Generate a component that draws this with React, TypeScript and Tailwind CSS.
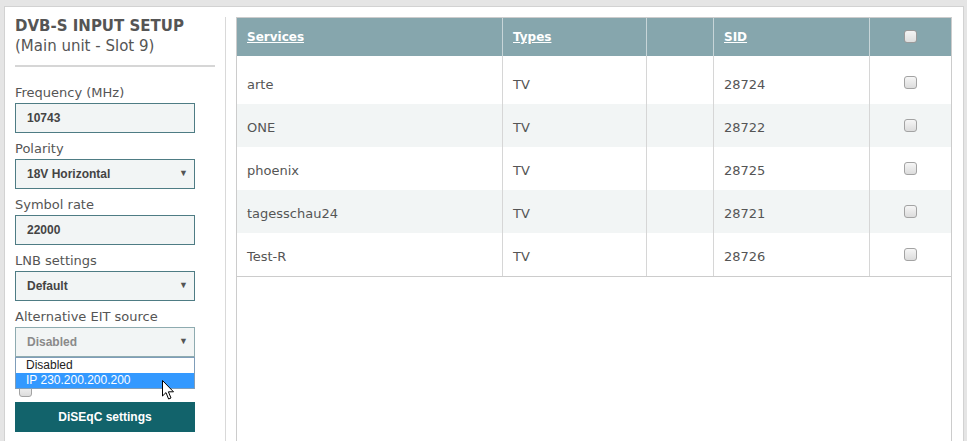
import React from "react";

const services = [
  { name: "arte", type: "TV", sid: "28724" },
  { name: "ONE", type: "TV", sid: "28722" },
  { name: "phoenix", type: "TV", sid: "28725" },
  { name: "tagesschau24", type: "TV", sid: "28721" },
  { name: "Test-R", type: "TV", sid: "28726" },
];

const Box: React.FC<{ header?: boolean }> = ({ header }) => (
  <span
    className={
      "inline-block w-[13px] h-[13px] rounded-[3px] border " +
      (header
        ? "border-[#9a9a9a] bg-gradient-to-b from-[#f4f4f4] to-[#dedede]"
        : "border-[#a3a3a3] bg-gradient-to-b from-[#f6f6f6] to-[#dcdcdc]")
    }
  />
);

const Field: React.FC<{ label: string; value: string; select?: boolean; disabled?: boolean }> = ({
  label,
  value,
  select,
  disabled,
}) => (
  <div className="mb-[7px]">
    <p className="text-[13px] leading-[17px] mb-[2px] text-[#555]">{label}</p>
    <div
      className={
        "h-[30px] w-[180px] border flex items-center justify-between pl-[11px] pr-[6px] bg-[#f2f5f5] font-['Liberation_Sans',Arial,sans-serif] text-[12px] font-bold " +
        (disabled ? "border-[#8eabb0] text-[#8a8a8a]" : "border-[#4e7c84] text-[#444]")
      }
    >
      <span>{value}</span>
      {select && <span className="text-[9px] text-[#555]">▼</span>}
    </div>
  </div>
);

export default function App() {
  return (
    <div className="h-[441px] overflow-hidden bg-[#e5e5e5] pl-[4px] pt-[6px] pr-[3px] font-['DejaVu_Sans',Verdana,sans-serif]">
      <div className="h-[480px] bg-white border border-[#d2d2d2] flex">
        {/* left column: input settings */}
        <div className="w-[220px] px-[10px] pt-[9px] relative">
          <h1 className="text-[15px] leading-[20px] font-bold text-[#555]">DVB-S INPUT SETUP</h1>
          <p className="text-[15px] leading-[20px] text-[#555]">(Main unit - Slot 9)</p>
          <div className="mt-[9px] h-[2px] bg-[#d6d6d6] mb-[17px]" />

          <Field label="Frequency (MHz)" value="10743" />
          <Field label="Polarity" value="18V Horizontal" select />
          <Field label="Symbol rate" value="22000" />
          <Field label="LNB settings" value="Default" select />
          <div className="relative pb-px">
            <Field label="Alternative EIT source" value="Disabled" select disabled />
            {/* open dropdown list */}
            <div className="absolute left-0 top-[49px] w-[180px] border border-[#7f9db9] bg-white font-['Liberation_Sans',Arial,sans-serif] text-[12px] z-10">
              <div className="h-[15px] leading-[15px] pl-[10px] text-[#222]">Disabled</div>
              <div className="h-[15px] leading-[15px] pl-[10px] bg-[#3399ff] text-white">IP 230.200.200.200</div>
            </div>
          </div>

          <div className="mt-[19px] pl-[4px] h-[13px] flex">
            <Box />
          </div>
          <button className="mt-[5px] h-[30px] w-[180px] bg-[#12636b] text-white text-[12px] font-bold font-['Liberation_Sans',Arial,sans-serif]">
            DiSEqC settings
          </button>

          {/* mouse pointer */}
          <svg className="absolute left-[157px] top-[373px] z-20" width="14" height="21" viewBox="0 0 14 21">
            <path
              d="M0.5 0.5 L0.5 16 L4 12.6 L6.6 19 L9 18 L6.4 11.8 L11.5 11.8 Z"
              fill="white"
              stroke="black"
              strokeWidth="1"
              strokeLinejoin="round"
            />
          </svg>
        </div>

        {/* separator */}
        <div className="mt-[10px] w-px bg-[#d9d9d9]" />

        {/* right column: services table */}
        <div className="flex-1 pl-[10px] pr-[11px] pt-[10px]">
          <div className="h-full border border-[#cccccc] text-[#555]">
            <div className="grid grid-cols-[266px_144px_67px_156px_1fr] h-[38px] bg-[#86a6ad] text-white text-[12px] font-bold">
              <div className="flex items-center pl-[10px] border-r border-[#c7d5d8]">
                <span className="underline">Services</span>
              </div>
              <div className="flex items-center pl-[10px] border-r border-[#c7d5d8]">
                <span className="underline">Types</span>
              </div>
              <div className="border-r border-[#c7d5d8]" />
              <div className="flex items-center pl-[10px] border-r border-[#c7d5d8]">
                <span className="underline">SID</span>
              </div>
              <div className="flex items-center justify-center pb-[2px]">
                <Box header />
              </div>
            </div>
            <div className="border-b border-[#cccccc] text-[13px]">
              {services.map((s, i) => {
                const first = i === 0;
                const cell =
                  "flex items-center pl-[10px] border-r border-[#d6d6d6] " + (first ? "pt-[10px]" : "pt-[5px]");
                return (
                  <div
                    key={s.name}
                    className={
                      "grid grid-cols-[266px_144px_67px_156px_1fr] " +
                      (first ? "h-[48px] " : "h-[43px] ") +
                      (i % 2 === 1 ? "bg-[#f2f5f5]" : "bg-white")
                    }
                  >
                    <div className={cell}>{s.name}</div>
                    <div className={cell}>{s.type}</div>
                    <div className="border-r border-[#d6d6d6]" />
                    <div className={cell}>{s.sid}</div>
                    <div className={"flex items-center justify-center " + (first ? "pt-[5px]" : "")}>
                      <Box />
                    </div>
                  </div>
                );
              })}
            </div>
          </div>
        </div>
      </div>
    </div>
  );
}
